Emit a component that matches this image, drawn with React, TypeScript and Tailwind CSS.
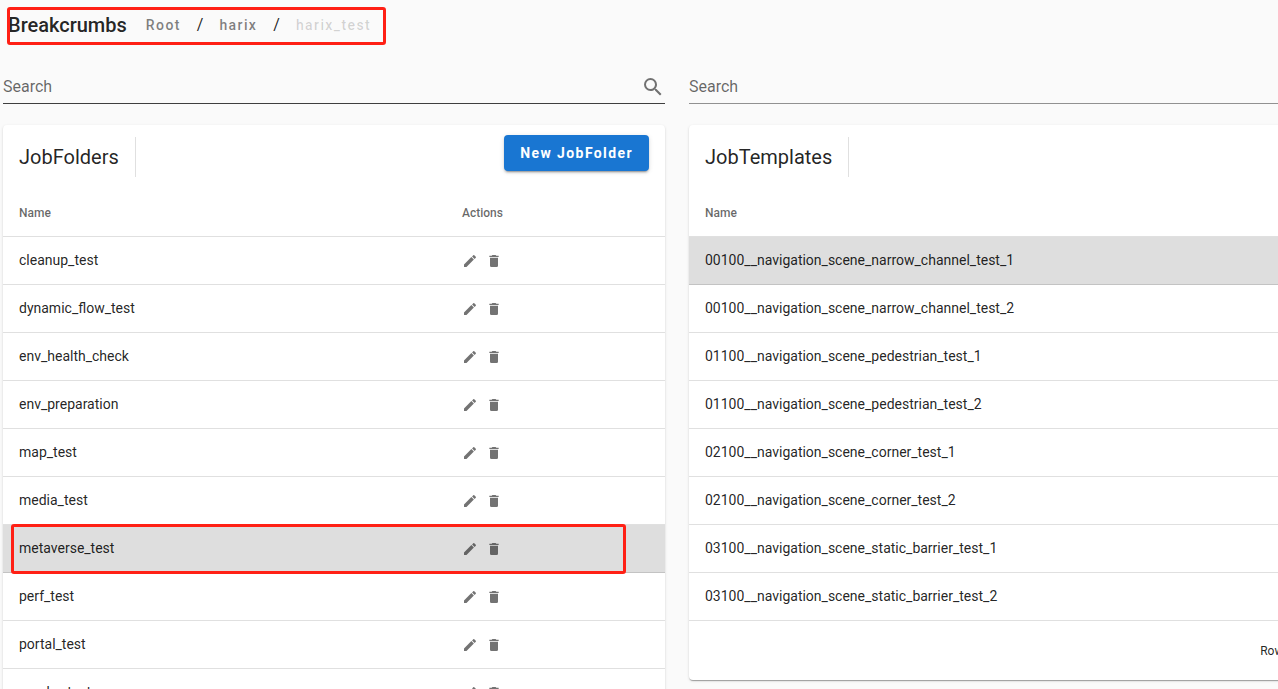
import React from "react";

const PENCIL =
  "M20.71,7.04C21.1,6.65 21.1,6 20.71,5.63L18.37,3.29C18,2.9 17.35,2.9 16.96,3.29L15.12,5.12L18.87,8.87M3,17.25V21H6.75L17.81,9.93L14.06,6.18L3,17.25Z";
const TRASH =
  "M19,4H15.5L14.5,3H9.5L8.5,4H5V6H19M6,19A2,2 0 0,0 8,21H16A2,2 0 0,0 18,19V7H6V19Z";
const MAGNIFY =
  "M9.5,3A6.5,6.5 0 0,1 16,9.5C16,11.11 15.41,12.59 14.44,13.73L14.71,14H15.5L20.5,19L19,20.5L14,15.5V14.71L13.73,14.44C12.59,15.41 11.11,16 9.5,16A6.5,6.5 0 0,1 3,9.5A6.5,6.5 0 0,1 9.5,3M9.5,5C7,5 5,7 5,9.5C5,12 7,14 9.5,14C12,14 14,12 14,9.5C14,7 12,5 9.5,5Z";

const folders = [
  "cleanup_test",
  "dynamic_flow_test",
  "env_health_check",
  "env_preparation",
  "map_test",
  "media_test",
  "metaverse_test",
  "perf_test",
  "portal_test",
  "smoke_test",
];

const templates = [
  "00100__navigation_scene_narrow_channel_test_1",
  "00100__navigation_scene_narrow_channel_test_2",
  "01100__navigation_scene_pedestrian_test_1",
  "01100__navigation_scene_pedestrian_test_2",
  "02100__navigation_scene_corner_test_1",
  "02100__navigation_scene_corner_test_2",
  "03100__navigation_scene_static_barrier_test_1",
  "03100__navigation_scene_static_barrier_test_2",
];

function Icon({ path, className }: { path: string; className: string }) {
  return (
    <svg viewBox="0 0 24 24" fill="currentColor" aria-hidden="true" className={className}>
      <path d={path} />
    </svg>
  );
}

function Highlight({ className }: { className: string }) {
  return (
    <span
      aria-hidden="true"
      className={`pointer-events-none absolute rounded-[3px] border-3 border-[#ff2015] ${className}`}
    />
  );
}

function SearchField({ label, lineClass, icon }: { label: string; lineClass: string; icon?: boolean }) {
  return (
    <div className={`flex h-[34px] items-center border-b ${lineClass}`}>
      <input
        type="text"
        aria-label={label}
        placeholder="Search"
        className="h-8 min-w-0 flex-1 bg-transparent text-base text-black/85 outline-none placeholder:text-black/60"
      />
      {icon && <Icon path={MAGNIFY} className="size-6 text-black/55" />}
    </div>
  );
}

function Toolbar({ title, children }: { title: string; children?: React.ReactNode }) {
  return (
    <div className="flex h-16 items-center px-4">
      <h2 className="text-xl">{title}</h2>
      <div className="mx-4 h-10 w-px bg-black/12" />
      <div className="ml-auto pb-2">{children}</div>
    </div>
  );
}

const headCell = "h-12 border-b border-black/12 px-4 text-left text-xs font-medium text-black/60";
const nameCell = "h-12 border-b border-black/12 px-4 pb-0.5";
const actionCell = "h-12 border-b border-black/12 px-4";

export default function App() {
  return (
    <div className="min-h-screen overflow-hidden bg-[#fafafa] font-[Roboto,sans-serif] text-black/87">
      <div className="max-h-screen w-[calc(100%+76px)]">
        <div className="flex">
          <header className="relative flex h-[50px] items-center pl-2 pr-[15px]">
            <h1 className="text-xl font-medium">Breakcrumbs</h1>
            <nav
              aria-label="Breadcrumbs"
              className="ml-[19px] flex items-center gap-4 text-sm font-medium tracking-widest text-black/50"
            >
              <a href="#root">Root</a>
              <span className="text-base font-normal tracking-normal text-black/87">/</span>
              <a href="#harix">harix</a>
              <span className="text-base font-normal tracking-normal text-black/87">/</span>
              <span aria-current="page" className="text-black/16">
                harix_test
              </span>
            </nav>
            <Highlight className="bottom-[5px] left-[7px] right-0 top-[7px]" />
          </header>
        </div>

        <main className="grid grid-cols-2 items-start gap-6 px-[3px] pt-5">
          <section>
            <SearchField label="Search job folders" lineClass="border-black/75" icon />
            <div className="mt-[21px] rounded bg-white shadow-[0_2px_1px_-1px_rgba(0,0,0,0.2),0_1px_1px_rgba(0,0,0,0.14),0_1px_3px_rgba(0,0,0,0.12)]">
              <Toolbar title="JobFolders">
                <button
                  type="button"
                  className="flex h-9 items-center rounded bg-[#1976d2] px-4 text-sm font-bold tracking-widest text-white shadow-[0_3px_1px_-2px_rgba(0,0,0,0.2),0_2px_2px_rgba(0,0,0,0.14),0_1px_5px_rgba(0,0,0,0.12)]"
                >
                  New JobFolder
                </button>
              </Toolbar>
              <table className="w-full table-fixed border-separate border-spacing-0 text-sm">
                <thead>
                  <tr>
                    <th className={`w-[443px] ${headCell}`}>Name</th>
                    <th className={headCell}>Actions</th>
                  </tr>
                </thead>
                <tbody>
                  {folders.map((name) => {
                    const selected = name === "metaverse_test";
                    return (
                      <tr key={name} className={selected ? "relative bg-[#dedede]" : ""}>
                        <td className={nameCell}>
                          {name}
                          {selected && <Highlight className="-inset-y-px left-2 right-[39px]" />}
                        </td>
                        <td className={actionCell}>
                          <div className="flex gap-2 text-black/55">
                            <button type="button" aria-label={`Edit ${name}`}>
                              <Icon path={PENCIL} className="size-4" />
                            </button>
                            <button type="button" aria-label={`Delete ${name}`}>
                              <Icon path={TRASH} className="size-4" />
                            </button>
                          </div>
                        </td>
                      </tr>
                    );
                  })}
                </tbody>
              </table>
            </div>
          </section>

          <section>
            <SearchField label="Search job templates" lineClass="border-black/42" />
            <div className="mt-[21px] rounded bg-white shadow-[0_2px_1px_-1px_rgba(0,0,0,0.2),0_1px_1px_rgba(0,0,0,0.14),0_1px_3px_rgba(0,0,0,0.12)]">
              <Toolbar title="JobTemplates" />
              <table className="w-full border-separate border-spacing-0 text-sm">
                <thead>
                  <tr>
                    <th className={headCell}>Name</th>
                  </tr>
                </thead>
                <tbody>
                  {templates.map((name, index) => (
                    <tr key={name} className={index === 0 ? "bg-[#dedede]" : ""}>
                      <td className={nameCell}>{name}</td>
                    </tr>
                  ))}
                </tbody>
              </table>
              <div className="flex h-[59px] items-center justify-end px-[9px] text-xs">
                <span>Rows per page:</span>
              </div>
            </div>
          </section>
        </main>
      </div>
    </div>
  );
}
